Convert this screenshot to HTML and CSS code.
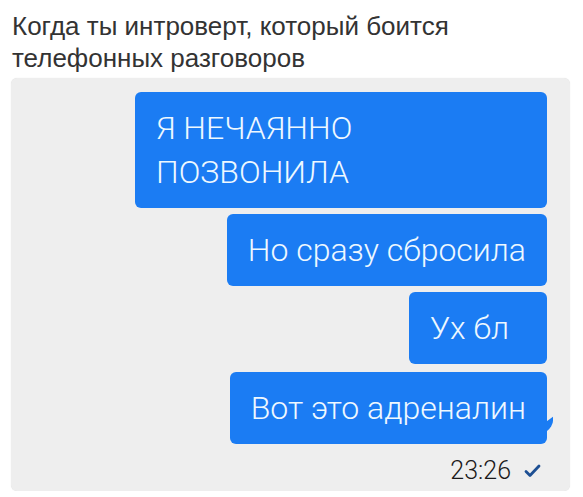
FILE: index.html
```html
<!DOCTYPE html>
<html lang="ru">
<head>
  <meta charset="UTF-8" />
  <meta name="viewport" content="width=device-width, initial-scale=1.0" />
  <title>Когда ты интроверт</title>
  <link rel="stylesheet" href="styles.css">
</head>
<body>
  <h1 class="caption">Когда ты интроверт, который боится телефонных разговоров</h1>

  <div class="chat">
    <div class="bubble">Я НЕЧАЯННО ПОЗВОНИЛА</div>
    <div class="bubble">Но сразу сбросила</div>
    <div class="bubble short">Ух бл</div>
    <div class="bubble last">Вот это адреналин</div>

    <div class="meta">
      <span class="time">23:26</span>
      <svg class="check" width="17" height="14" viewBox="0 0 17 14">
        <polyline points="2,7.5 6,11.5 15,2" fill="none" stroke="#1d4f93" stroke-width="2.8" stroke-linecap="round" stroke-linejoin="round" />
      </svg>
    </div>
  </div>
</body>
</html>
```

FILE: styles.css
```css
body {
  margin: 0;
  background: #fff;
}

.caption {
  font-family: 'Liberation Sans', Arial, sans-serif;
  font-weight: 400;
  font-size: 26px;
  line-height: 32px;
  color: #333;
  margin: 0;
  padding: 10px 100px 0 12px;
}

.chat {
  margin: 4px 13px 0 11px;
  padding: 14px 23px 6px 0;
  background: #eeeeee;
  border-radius: 6px;
  box-shadow: 0 0 1px rgba(0,0,0,0.15);
  display: flex;
  flex-direction: column;
  align-items: flex-end;
  gap: 6px;
}

.bubble {
  position: relative;
  max-width: 412px;
  box-sizing: border-box;
  padding: 14px 21px;
  background: #1b7cf3;
  color: #eef8ff;
  border-radius: 6px;
  font-family: 'Roboto Light', Roboto, 'Noto Sans', sans-serif;
  font-weight: 300;
  font-size: 32px;
  line-height: 44px;
  -webkit-text-stroke: 0.9px #1b7cf3;
  paint-order: stroke fill;
}

.bubble.short {
  padding-right: 38px;
}

.bubble.last {
  margin-top: 2px;
}

.bubble.last::after {
  content: "";
  position: absolute;
  right: -6px;
  bottom: 14px;
  width: 9px;
  height: 10px;
  background: #1b7cf3;
  border-radius: 0 0 6px 0;
  transform: skewY(-35deg);
}

.meta {
  margin-top: 7px;
  margin-right: 6px;
  display: flex;
  align-items: center;
  gap: 13px;
}

.time {
  font-family: 'Roboto Light', Roboto, 'Noto Sans', sans-serif;
  font-weight: 300;
  font-size: 25px;
  line-height: 28px;
  color: #1a1a1a;
}
```
